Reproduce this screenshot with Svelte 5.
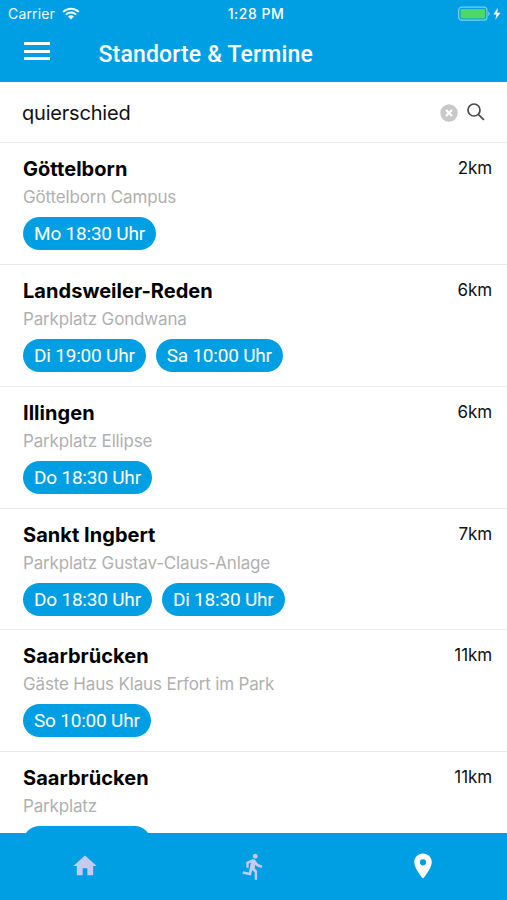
<script lang="ts">
	interface Place {
		name: string;
		spot: string;
		distance: string;
		times: string[];
	}

	let query = $state('quierschied');

	const places: Place[] = [
		{ name: 'Göttelborn', spot: 'Göttelborn Campus', distance: '2km', times: ['Mo 18:30 Uhr'] },
		{
			name: 'Landsweiler-Reden',
			spot: 'Parkplatz Gondwana',
			distance: '6km',
			times: ['Di 19:00 Uhr', 'Sa 10:00 Uhr']
		},
		{ name: 'Illingen', spot: 'Parkplatz Ellipse', distance: '6km', times: ['Do 18:30 Uhr'] },
		{
			name: 'Sankt Ingbert',
			spot: 'Parkplatz Gustav-Claus-Anlage',
			distance: '7km',
			times: ['Do 18:30 Uhr', 'Di 18:30 Uhr']
		},
		{
			name: 'Saarbrücken',
			spot: 'Gäste Haus Klaus Erfort im Park',
			distance: '11km',
			times: ['So 10:00 Uhr']
		},
		{ name: 'Saarbrücken', spot: 'Parkplatz', distance: '11km', times: ['So 10:00 Uhr'] }
	];
</script>

<div class="screen">
	<header>
		<div class="status">
			<span class="carrier">
				Carrier
				<svg class="wifi" viewBox="0 0 18 13" width="18" height="13">
					<path d="M1.2 4.9a11 11 0 0 1 15.6 0M3.9 7.6a7.2 7.2 0 0 1 10.2 0" />
					<path class="dot" d="M9 12.6l3-3a4.3 4.3 0 0 0-6 0z" />
				</svg>
			</span>
			<span class="clock">1:28 PM</span>
			<span class="power">
				<svg viewBox="0 0 44 16" width="44" height="16">
					<rect class="shell" x="0.7" y="1.2" width="28.2" height="13" rx="3" />
					<rect class="charge" x="2.5" y="3" width="24.5" height="9.4" rx="1" />
					<path class="cap" d="M30.2 5.4c1.8.8 1.8 3.8 0 4.6z" />
					<path class="bolt" d="M39.8 1.8L35.5 8.4h3l-1.2 5.4 5.2-7.1h-3.2z" />
				</svg>
			</span>
		</div>
		<div class="bar">
			<button class="menu" aria-label="Menü"><i></i><i></i><i></i></button>
			<h1>Standorte &amp; Termine</h1>
		</div>
	</header>

	<div class="search">
		<input bind:value={query} aria-label="Suche" />
		<button class="clear" aria-label="Löschen" onclick={() => (query = '')}>
			<svg viewBox="0 0 18 18" width="18" height="18">
				<circle cx="9" cy="9" r="8.7" />
				<path d="M6 6l6 6M12 6l-6 6" />
			</svg>
		</button>
		<svg class="lens" viewBox="0 0 18 18" width="18" height="18">
			<circle cx="7" cy="7" r="6" />
			<path d="M11.3 11.3l5.6 5.6" />
		</svg>
	</div>

	<main>
		{#each places as place}
			<article>
				<div class="top">
					<h2>{place.name}</h2>
					<span class="distance">{place.distance}</span>
				</div>
				<p>{place.spot}</p>
				<div class="times">
					{#each place.times as time}
						<span class="time">{time}</span>
					{/each}
				</div>
			</article>
		{/each}
	</main>

	<nav>
		<button aria-label="Start">
			<svg viewBox="0 0 24 24" width="28" height="28">
				<path d="M10 20v-6h4v6h5v-8h3L12 3 2 12h3v8z" />
			</svg>
		</button>
		<button aria-label="Training">
			<svg viewBox="0 0 24 24" width="29" height="29">
				<path
					d="M13.49 5.48c1.1 0 2-.9 2-2s-.9-2-2-2-2 .9-2 2 .9 2 2 2zm-3.6 13.9l1-4.4 2.1 2v6h2v-7.5l-2.1-2 .6-3c1.3 1.5 3.3 2.5 5.5 2.5v-2c-1.9 0-3.5-1-4.3-2.4l-1-1.6c-.4-.6-1-1-1.7-1-.3 0-.5.1-.8.1l-5.2 2.2v4.7h2v-3.4l1.8-.7-1.6 8.1-4.9-1-.4 2 7 1.4z"
				/>
			</svg>
		</button>
		<button class="active" aria-label="Standorte">
			<svg viewBox="0 0 24 24" width="30" height="30">
				<path
					d="M12 2C8.13 2 5 5.13 5 9c0 5.25 7 13 7 13s7-7.75 7-13c0-3.87-3.13-7-7-7zm0 9.5a2.5 2.5 0 0 1 0-5 2.5 2.5 0 0 1 0 5z"
				/>
			</svg>
		</button>
	</nav>
</div>

<style>
	:global(body) {
		margin: 0;
	}

	.screen {
		display: flex;
		flex-direction: column;
		height: 900px;
		overflow: hidden;
		background: #fff;
		color: #000;
		font-family: Inter, 'Liberation Sans', sans-serif;
	}

	header {
		flex: none;
		height: 81.5px;
		background: #009fe3;
		color: #fff;
	}

	button {
		padding: 0;
		border: none;
		background: none;
	}

	svg {
		display: block;
	}

	.status {
		display: grid;
		grid-template-columns: 1fr auto 1fr;
		align-items: center;
		height: 27px;
		padding: 0 5px 0 8px;
		font-size: 14px;
	}

	.carrier {
		display: flex;
		align-items: center;
		gap: 7px;
		letter-spacing: 0.15px;
		opacity: 0.95;
	}

	.wifi {
		fill: none;
		stroke: #fff;
		stroke-width: 2;
	}

	.wifi .dot {
		fill: #fff;
		stroke: none;
	}

	.clock {
		margin-left: 2px;
		font-weight: 500;
		font-size: 14px;
		letter-spacing: 0.5px;
	}

	.power {
		justify-self: end;
	}

	.shell {
		fill: none;
		stroke: #7fcdf0;
		stroke-width: 1.2;
	}

	.charge {
		fill: #4cd964;
	}

	.cap {
		fill: #7fcdf0;
	}

	.bolt {
		fill: #fff;
	}

	.bar {
		display: flex;
		align-items: center;
		height: 54px;
		padding-left: 24px;
	}

	.menu {
		display: flex;
		flex-direction: column;
		gap: 4.3px;
		width: 26px;
		margin: -6px 48.5px 0 0;
	}

	.menu i {
		height: 3px;
		background: #fff;
	}

	h1 {
		margin: 0;
		font: 500 23px Roboto, sans-serif;
		letter-spacing: 0.15px;
	}

	.search {
		display: flex;
		flex: none;
		align-items: center;
		box-sizing: border-box;
		height: 61.7px;
		padding: 2px 22px 0;
		border-bottom: 1px solid #ececec;
	}

	input {
		flex: 1;
		min-width: 0;
		padding: 0;
		border: none;
		outline: none;
		background: none;
		color: #111;
		font: 20px Inter, sans-serif;
		letter-spacing: -0.2px;
	}

	.clear {
		margin: 1px 9px 0 0;
	}

	.clear circle {
		fill: #c8c8c8;
	}

	.clear path {
		stroke: #fff;
		stroke-width: 2;
	}

	.lens {
		fill: none;
		stroke: #4a4a4a;
		stroke-width: 1.7;
		margin: -2px 0 0;
	}

	main {
		flex: 1;
		min-height: 0;
		overflow: hidden;
	}

	article {
		box-sizing: border-box;
		height: 121.8px;
		padding: 13px 15px 0 23px;
		border-bottom: 1px solid #e9e9e9;
	}

	.top {
		display: flex;
		justify-content: space-between;
		height: 28px;
		line-height: 27px;
	}

	h2 {
		margin: 0;
		font-size: 20px;
		font-weight: 700;
		letter-spacing: 0.04px;
	}

	.distance {
		font-size: 17px;
		line-height: 25px;
		color: #111;
		letter-spacing: -0.1px;
	}

	p {
		height: 33px;
		margin: 0;
		color: #b0b0b0;
		font-size: 17px;
		line-height: 26px;
		letter-spacing: -0.16px;
	}

	.times {
		display: flex;
		gap: 10px;
	}

	.time {
		padding: 0 11px;
		border-radius: 17px;
		background: #009fe3;
		color: #fff;
		font: 19px/33px Roboto, sans-serif;
		letter-spacing: -0.2px;
	}

	nav {
		display: grid;
		flex: none;
		grid-template-columns: repeat(3, 1fr);
		height: 67.5px;
		background: #009fe3;
	}

	nav button {
		display: flex;
		align-items: center;
		justify-content: center;
		color: #c5caf0;
	}

	nav .active {
		color: #fff;
	}

	nav path {
		fill: currentColor;
	}
</style>
